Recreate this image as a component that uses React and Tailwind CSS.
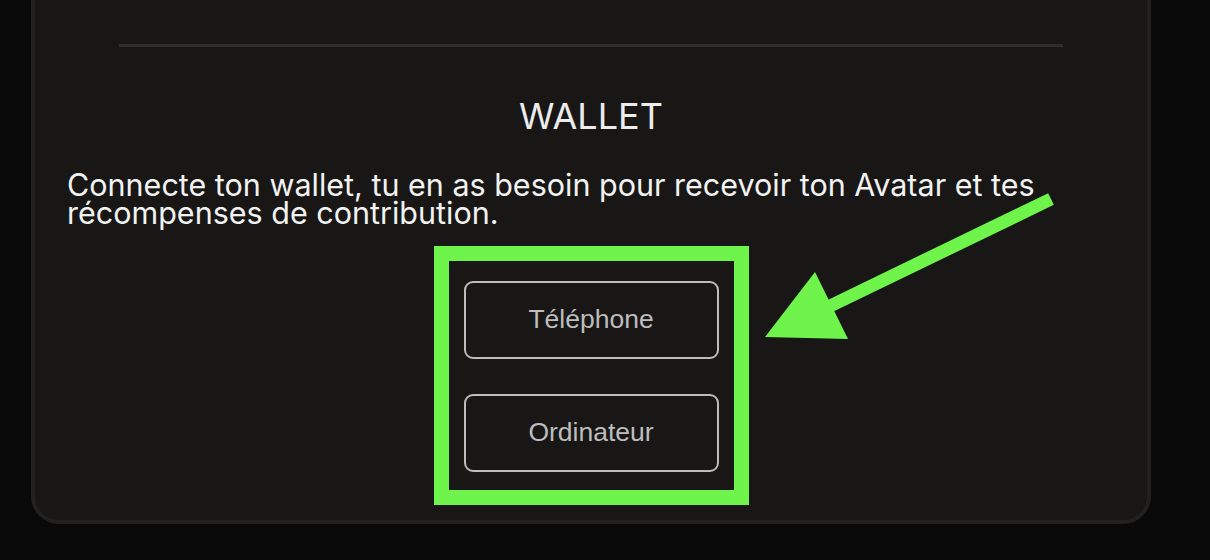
import React from 'react';

const options = ['Téléphone', 'Ordinateur'];

export default function App() {
  return (
    <div className="relative h-[560px] w-[1210px] overflow-hidden bg-[#0a0909]">
      <div className="ml-[31px] -mt-[40px] w-[1120px] rounded-[28px] border-4 border-[#222120] bg-[#181716] pt-[80px] pb-[15px]">
        <div className="mx-[84px] h-[3px] bg-[#2e2d2c]" />

        <h2
          className="mt-[49px] text-center text-[36px] leading-[40px] font-normal text-[#ececec]"
          style={{ fontFamily: 'Inter, "Noto Sans", sans-serif' }}
        >
          WALLET
        </h2>

        <p
          className="mt-[35px] px-[32px] text-[30.5px] leading-[28px] text-[#f2f2f2]"
          style={{ fontFamily: 'Inter, "Noto Sans", sans-serif' }}
        >
          Connecte ton wallet, tu en as besoin pour recevoir ton Avatar et tes récompenses de contribution.
        </p>

        <div className="mt-[19px] flex justify-center">
          <div className="flex flex-col gap-[35px] border-[15px] border-[#6ef44b] px-[15px] pt-[20px] pb-[18px]">
            {options.map(opt => (
              <button
                key={opt}
                className="h-[78px] w-[255px] rounded-[9px] border-2 border-[#bdbcbb] bg-transparent text-[26.5px] text-[#bdbdbd]"
                style={{ fontFamily: '"Liberation Sans", Arial, sans-serif' }}
              >
                {opt}
              </button>
            ))}
          </div>
        </div>
      </div>

      <svg className="pointer-events-none absolute inset-0" width="1210" height="560" viewBox="0 0 1210 560">
        <line x1="1051" y1="199" x2="828" y2="307" stroke="#6ef44b" strokeWidth="13" />
        <polygon points="765,337 815,272 848,339" fill="#6ef44b" />
      </svg>
    </div>
  );
}
